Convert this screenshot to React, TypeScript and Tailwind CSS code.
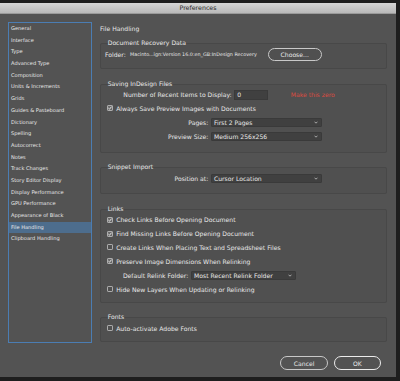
const font = { fontFamily: '"DejaVu Sans", "Liberation Sans", sans-serif' };

const sections = [
  "General",
  "Interface",
  "Type",
  "Advanced Type",
  "Composition",
  "Units & Increments",
  "Grids",
  "Guides & Pasteboard",
  "Dictionary",
  "Spelling",
  "Autocorrect",
  "Notes",
  "Track Changes",
  "Story Editor Display",
  "Display Performance",
  "GPU Performance",
  "Appearance of Black",
  "File Handling",
  "Clipboard Handling",
];

const Check = ({ on }: { on?: boolean }) => (
  <svg width="6" height="6" viewBox="0 0 6 6" className="shrink-0">
    <rect x="0.5" y="0.5" width="5" height="5" rx="0.6" fill={on ? "#6a6a6a" : "none"} stroke="#c4c4c4" strokeWidth="0.8" />
    {on && <path d="M1.4 3.1 L2.5 4.2 L4.6 1.6" fill="none" stroke="#f2f2f2" strokeWidth="0.9" />}
  </svg>
);

const CheckRow = ({ on, label, className = "" }: { on?: boolean; label: string; className?: string }) => (
  <div className={`flex h-[10px] items-center gap-[3.5px] pl-[1.7px] ${className}`}>
    <Check on={on} />
    <span>{label}</span>
  </div>
);

const Select = ({ value, w }: { value: string; w: string }) => (
  <div className={`flex h-[9px] items-center justify-between rounded-[1px] border border-[#3a3a3a] bg-[#404040] pl-[2px] pr-[3px] ${w}`}>
    <span>{value}</span>
    <svg width="4" height="3" viewBox="0 0 4 3">
      <path d="M0.5 0.7 L2 2.2 L3.5 0.7" fill="none" stroke="#d8d8d8" strokeWidth="0.7" />
    </svg>
  </div>
);

const Group = ({ title, className = "", children }: { title: string; className?: string; children: React.ReactNode }) => (
  <fieldset className={`rounded-[2px] border border-[#484848] bg-[#505050] pl-[4px] ${className}`}>
    <legend className="ml-[2.7px] leading-[8px]">{title}</legend>
    {children}
  </fieldset>
);

const Sidebar = () => (
  <ul className="mt-[8px] h-[321px] w-[84px] shrink-0 border-[1.5px] border-[#4b7db3] text-[5.1px]">
    {sections.map((s) => (
      <li
        key={s}
        className={`flex h-[11.7px] items-center pl-[2px] ${s === "File Handling" ? "bg-[#4d6d8d]" : ""}`}
      >
        {s}
      </li>
    ))}
  </ul>
);

export default function App() {
  return (
    <div className="h-[381px] w-[400px] overflow-hidden bg-[#1e1e1e] pt-[3px] text-[#e8e8e8]" style={font}>
      <div className="flex h-[374px] w-[396px] flex-col bg-[#535353]">
        <div className="flex h-[11px] items-center justify-center border-b border-[#9a9a9a] bg-gradient-to-b from-[#d6d6d6] to-[#b9b9b9] text-[6.3px] text-[#2a2a2a]">
          Preferences
        </div>
        <div className="flex pl-[8px]">
          <Sidebar />
          <div className="ml-[8px] w-[287px] pt-[11px] text-[6.1px]">
            <div className="h-[8px] leading-[8px]">File Handling</div>

            <Group title="Document Recovery Data" className="mt-[6px] pb-[7px] pt-[1px]">
              <div className="flex h-[13px] items-center">
                <span className="w-[25px]">Folder:</span>
                <span className="w-[137.7px] whitespace-nowrap text-[4.85px]">
                  Macinto...ign:Version 16.0:en_GB:InDesign Recovery
                </span>
                <button className="h-[13px] w-[54px] rounded-full border border-[#c8c8c8] text-[6.1px]">
                  Choose...
                </button>
              </div>
            </Group>

            <Group title="Saving InDesign Files" className="mt-[11px] pb-[10px] pt-[2px]">
              <div className="flex h-[10px] items-center">
                <span className="w-[126.7px] text-right">Number of Recent Items to Display:</span>
                <div className="ml-[2.6px] flex h-[9.3px] w-[33.4px] items-center border border-[#3a3a3a] bg-[#404040] pl-[2px]">
                  0
                </div>
                <span className="ml-[23px] text-[#db4b41]">Make this zero</span>
              </div>
              <CheckRow on label="Always Save Preview Images with Documents" className="mt-[3.3px]" />
              <div className="mt-[4.7px] flex h-[10px] items-center">
                <span className="w-[103.3px] text-right">Pages:</span>
                <div className="ml-[2.7px]">
                  <Select value="First 2 Pages" w="w-[111.3px]" />
                </div>
              </div>
              <div className="mt-[3.7px] flex h-[10px] items-center">
                <span className="w-[103.3px] text-right">Preview Size:</span>
                <div className="ml-[2.7px]">
                  <Select value="Medium 256x256" w="w-[111.3px]" />
                </div>
              </div>
            </Group>

            <Group title="Snippet Import" className="mt-[10.4px] pb-[9.7px] pt-[2.3px]">
              <div className="flex h-[10px] items-center">
                <span className="w-[103.3px] text-right">Position at:</span>
                <div className="ml-[2.7px]">
                  <Select value="Cursor Location" w="w-[111.3px]" />
                </div>
              </div>
            </Group>

            <Group title="Links" className="mt-[11px] pb-[8.3px] pt-[1.6px]">
              <CheckRow on label="Check Links Before Opening Document" />
              <CheckRow on label="Find Missing Links Before Opening Document" className="mt-[3.9px]" />
              <CheckRow label="Create Links When Placing Text and Spreadsheet Files" className="mt-[3.9px]" />
              <CheckRow on label="Preserve Image Dimensions When Relinking" className="mt-[3.9px]" />
              <div className="mt-[3.9px] flex h-[10px] items-center">
                <span className="w-[83.3px] text-right">Default Relink Folder:</span>
                <div className="ml-[2.7px]">
                  <Select value="Most Recent Relink Folder" w="w-[105px]" />
                </div>
              </div>
              <CheckRow label="Hide New Layers When Updating or Relinking" className="mt-[3.9px]" />
            </Group>

            <Group title="Fonts" className="mt-[10px] pb-[8px] pt-[2px]">
              <CheckRow label="Auto-activate Adobe Fonts" />
            </Group>

            <div className="mt-[13.7px] flex justify-end gap-[5.4px] pr-[6px]">
              <button className="h-[14.3px] w-[48.3px] rounded-full border border-[#c8c8c8]">Cancel</button>
              <button className="h-[14.3px] w-[47.3px] rounded-full border-[1.5px] border-[#ececec]">OK</button>
            </div>
          </div>
        </div>
      </div>
    </div>
  );
}
